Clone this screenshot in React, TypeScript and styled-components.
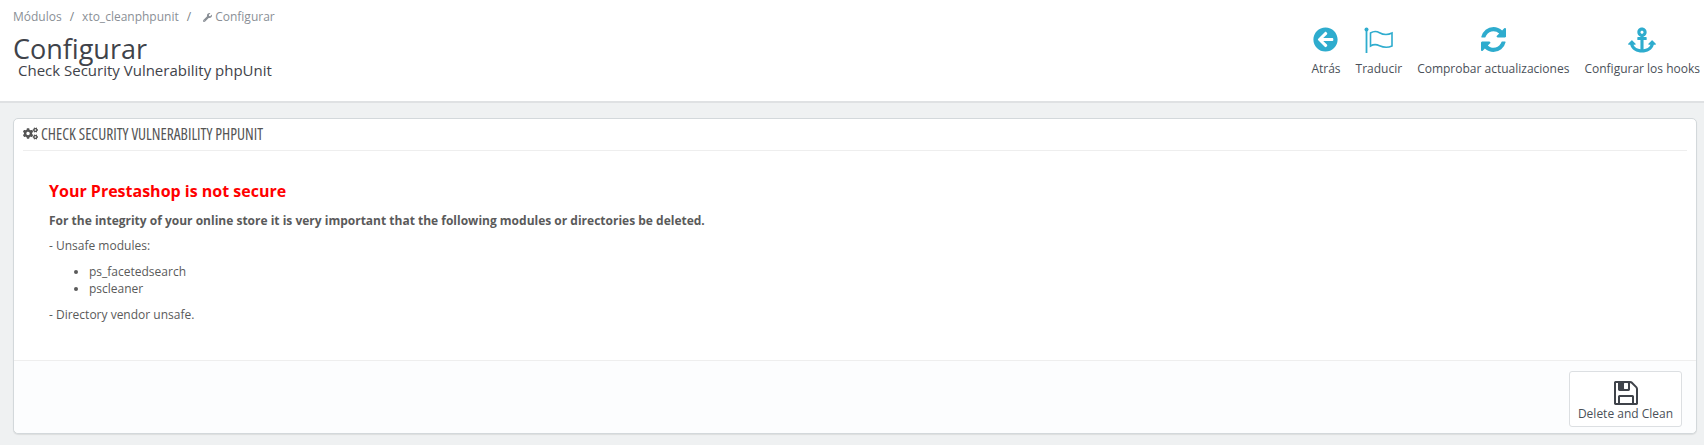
import React from 'react';
import styled, { createGlobalStyle } from 'styled-components';
import { FaArrowCircleLeft, FaAnchor, FaWrench, FaCogs } from 'react-icons/fa';

const GlobalStyle = createGlobalStyle`
  * {
    box-sizing: border-box;
  }
  html, body {
    margin: 0;
    padding: 0;
    background: #eff1f2;
    font-family: "Open Sans", "Liberation Sans", sans-serif;
    font-size: 12px;
    color: #5a5a5a;
  }
`;

const Page = styled.div`
  width: 1704px;
  height: 445px;
  overflow: hidden;
`;

const PageHead = styled.header`
  height: 103px;
  background: #fff;
  border-bottom: 2px solid #dfe1e3;
  display: flex;
  justify-content: space-between;
  padding: 0 4px 0 13px;
`;

const TitleBlock = styled.div`
  padding-top: 9px;
`;

const Breadcrumb = styled.nav`
  display: flex;
  align-items: center;
  height: 16px;
  color: #8a8f96;
  font-size: 12px;
  line-height: 16px;
`;

const Sep = styled.span<{ $wide?: boolean }>`
  margin: 0 ${(p) => (p.$wide ? '12px' : '8px')} 0 8px;
  color: #7a7f86;
`;

const Crumb = styled.span`
  display: inline-flex;
  align-items: center;
  gap: 3px;
  svg {
    width: 9px;
    height: 9px;
  }
`;

const Title = styled.h1`
  margin: 9px 0 0;
  font-size: 27px;
  font-weight: 400;
  line-height: 30px;
  color: #3f434a;
`;

const Subtitle = styled.div`
  margin: -4px 0 0 5px;
  font-size: 15px;
  line-height: 20px;
  color: #3f434a;
`;

const Toolbar = styled.div`
  display: flex;
  align-items: flex-start;
  gap: 15px;
  padding-top: 22px;
`;

const ToolItem = styled.a`
  display: flex;
  flex-direction: column;
  align-items: center;
  color: #4a5058;
  font-size: 12px;
  line-height: 16px;
  white-space: nowrap;
  svg {
    display: block;
    color: #2eacce;
  }
`;

const ToolIcon = styled.span`
  height: 35px;
  margin-bottom: 4px;
  display: flex;
  align-items: center;
  justify-content: center;
`;

const Main = styled.main`
  padding: 15px 7px 0 13px;
`;

const Panel = styled.section`
  height: 316px;
  display: flex;
  flex-direction: column;
  background: #fff;
  border: 1px solid #d3d8db;
  border-radius: 5px;
  box-shadow: 0 1px 1px rgba(0, 0, 0, 0.08);
`;

const PanelHead = styled.div`
  height: 32px;
  margin: 0 9px;
  padding-bottom: 2px;
  display: flex;
  align-items: center;
  gap: 3px;
  border-bottom: 1px solid #eeeeee;
  font-family: "Liberation Sans Narrow", "Open Sans", sans-serif;
  font-stretch: condensed;
  font-size: 15.5px;
  text-transform: uppercase;
  color: #555;
  svg {
    width: 15px;
    height: 13px;
  }
`;

const PanelBody = styled.div`
  flex: 1;
  padding: 28px 35px 0;
`;

const Alert = styled.h3`
  margin: 0;
  color: #ff0000;
  font-size: 16px;
  font-weight: 700;
  line-height: 24px;
`;

const Lead = styled.p`
  margin: 9px 0 0;
  font-weight: 700;
  line-height: 17px;
`;

const Line = styled.p`
  margin: 8px 0 0;
  line-height: 17px;
`;

const ModuleList = styled.ul`
  margin: 9px 0 0;
  padding: 0 0 0 40px;
  line-height: 17.4px;
`;

const PanelFoot = styled.div`
  height: 73px;
  padding: 10px 14px 0 0;
  display: flex;
  justify-content: flex-end;
  align-items: flex-start;
  background: #fcfdfe;
  border-top: 1px solid #eeeeee;
  border-radius: 0 0 5px 5px;
`;

const SaveButton = styled.button`
  width: 113px;
  height: 56px;
  padding: 9px 0 0;
  display: flex;
  flex-direction: column;
  align-items: center;
  background: #fff;
  border: 1px solid #dcdfe2;
  border-radius: 3px;
  font-family: inherit;
  font-size: 12px;
  line-height: 16px;
  color: #4a5058;
  svg {
    width: 24px;
    height: 24px;
    color: #3f434a;
    margin-bottom: 1px;
  }
`;

const FlagIcon = () => (
  <svg width="29" height="26" viewBox="0 0 29 26" fill="none">
    <circle cx="2.5" cy="2.5" r="2" fill="#2eacce" />
    <rect x="1.6" y="3" width="1.8" height="23" fill="#2eacce" />
    <path
      d="M6.5 6c3-2 6-2 9-.3s8 2.5 12.5.3v13c-4.500 2-9 1.300-12.500-.3s-6-1.500-9 .3z"
      stroke="#2eacce"
      strokeWidth="1.6"
    />
  </svg>
);

const RefreshIcon = () => (
  <svg width="25" height="25" viewBox="0 128 1536 1536" fill="currentColor">
    <path d="M1511 1056q0 5-1 7-64 268-268 434.5t-478 166.5q-146 0-282.5-55t-243.5-157l-129 129q-19 19-45 19t-45-19-19-45v-448q0-26 19-45t45-19h448q26 0 45 19t19 45-19 45l-137 137q71 66 161 102t187 36q134 0 250-65t186-179q11-17 53-117 8-23 30-23h192q13 0 22.5 9.5t9.5 22.5zm25-800v448q0 26-19 45t-45 19h-448q-26 0-45-19t-19-45 19-45l138-138q-148-137-349-137-134 0-250 65t-186 179q-11 17-53 117-8 23-30 23h-199q-13 0-22.5-9.5t-9.5-22.5v-7q65-268 270-434.5t480-166.5q146 0 284 55.5t245 156.5l130-129q19-19 45-19t45 19 19 45z" />
  </svg>
);

const FloppyIcon = () => (
  <svg viewBox="128 128 1536 1536" fill="currentColor">
    <path d="M512 1536h768v-384h-768v384zm896 0h128v-896q0-14-10-38.5t-20-34.5l-281-281q-10-10-34-20t-39-10v416q0 40-28 68t-68 28h-576q-40 0-68-28t-28-68v-416h-128v1280h128v-416q0-40 28-68t68-28h832q40 0 68 28t28 68v416zm-384-928v-320q0-13-9.5-22.5t-22.5-9.5h-192q-13 0-22.5 9.5t-9.5 22.5v320q0 13 9.5 22.5t22.5 9.5h192q13 0 22.5-9.5t9.5-22.5zm640 32v928q0 40-28 68t-68 28h-1344q-40 0-68-28t-28-68v-1344q0-40 28-68t68-28h928q40 0 88 20t76 48l280 280q28 28 48 76t20 88z" />
  </svg>
);

const tools = [
  { label: 'Atrás', icon: <FaArrowCircleLeft size={25} /> },
  { label: 'Traducir', icon: <FlagIcon /> },
  { label: 'Comprobar actualizaciones', icon: <RefreshIcon /> },
  { label: 'Configurar los hooks', icon: <FaAnchor size={28} /> },
];

const App: React.FC = () => {
  return (
    <Page>
      <GlobalStyle />
      <PageHead>
        <TitleBlock>
          <Breadcrumb>
            <span>Módulos</span>
            <Sep>/</Sep>
            <span>xto_cleanphpunit</span>
            <Sep $wide>/</Sep>
            <Crumb>
              <FaWrench />
              Configurar
            </Crumb>
          </Breadcrumb>
          <Title>Configurar</Title>
          <Subtitle>Check Security Vulnerability phpUnit</Subtitle>
        </TitleBlock>
        <Toolbar>
          {tools.map((tool) => (
            <ToolItem key={tool.label}>
              <ToolIcon>{tool.icon}</ToolIcon>
              {tool.label}
            </ToolItem>
          ))}
        </Toolbar>
      </PageHead>
      <Main>
        <Panel>
          <PanelHead>
            <FaCogs />
            Check Security Vulnerability phpUnit
          </PanelHead>
          <PanelBody>
            <Alert>Your Prestashop is not secure</Alert>
            <Lead>For the integrity of your online store it is very important that the following modules or directories be deleted.</Lead>
            <Line>- Unsafe modules:</Line>
            <ModuleList>
              <li>ps_facetedsearch</li>
              <li>pscleaner</li>
            </ModuleList>
            <Line>- Directory vendor unsafe.</Line>
          </PanelBody>
          <PanelFoot>
            <SaveButton>
              <FloppyIcon />
              Delete and Clean
            </SaveButton>
          </PanelFoot>
        </Panel>
      </Main>
    </Page>
  );
};

export default App;
